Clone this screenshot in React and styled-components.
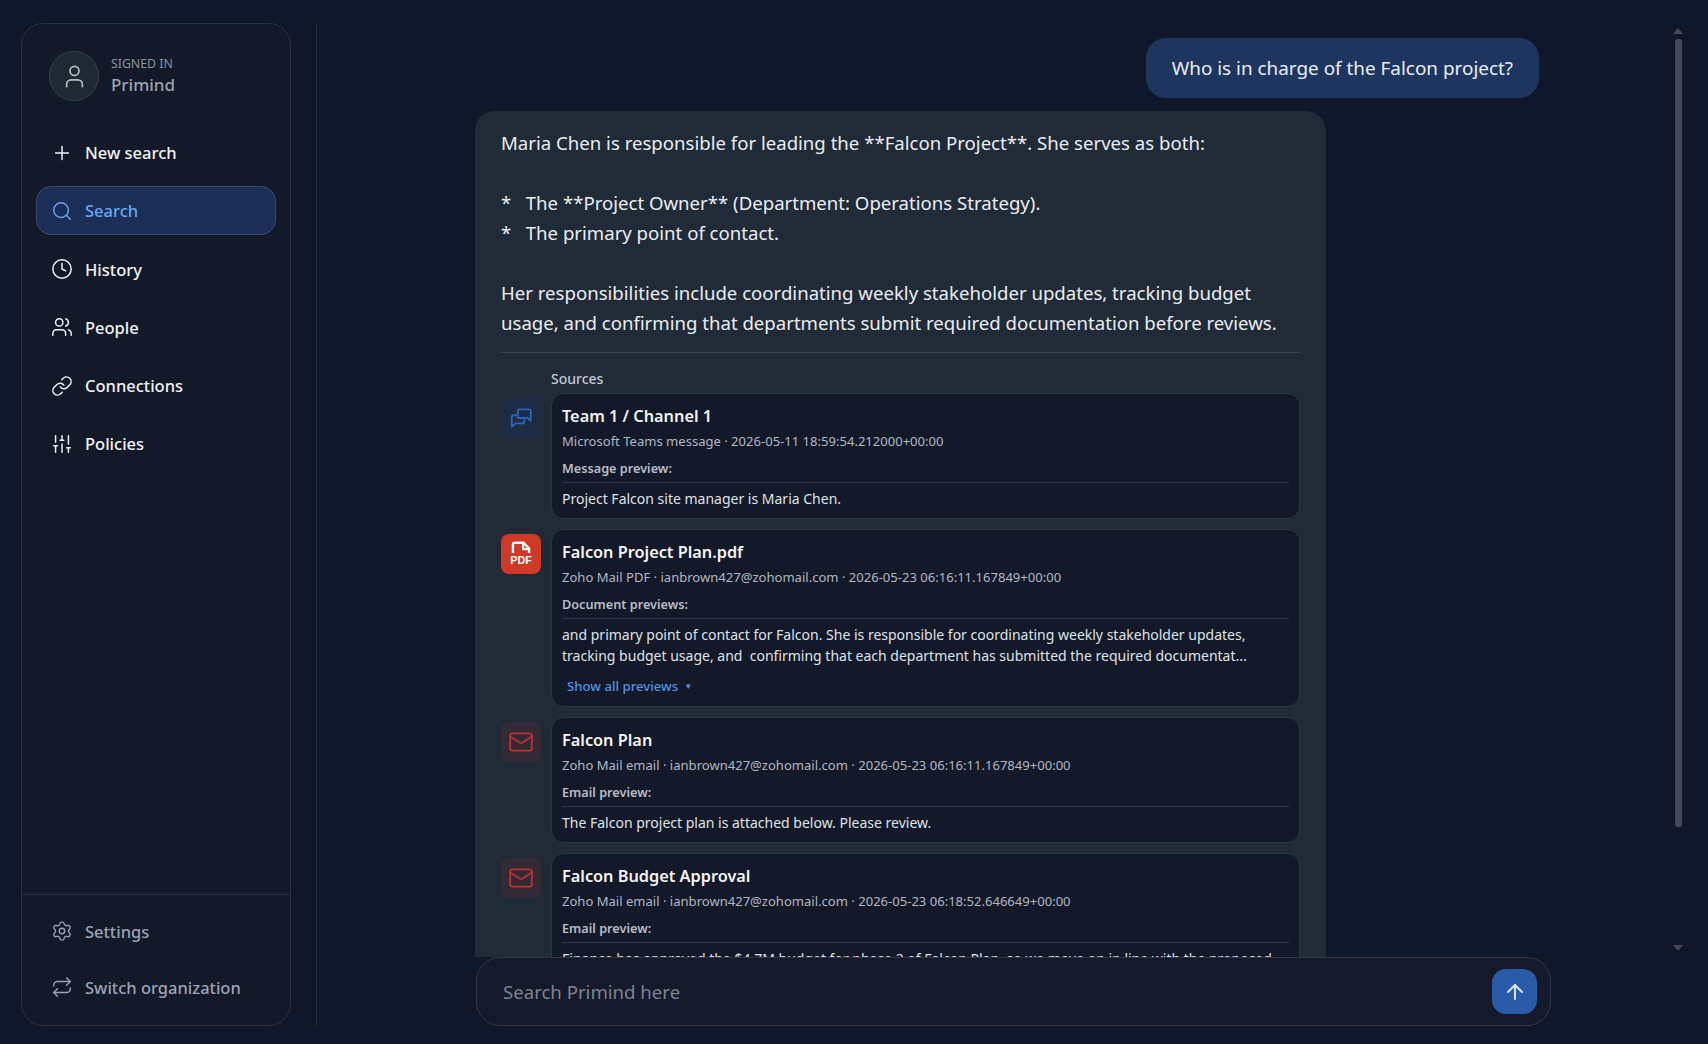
import React from "react";
import styled, { createGlobalStyle } from "styled-components";
import {
  User,
  Plus,
  Search,
  Clock,
  Users,
  Link,
  SlidersVertical,
  Settings,
  Repeat,
  Mail,
  ArrowUp,
} from "lucide-react";

const GlobalStyle = createGlobalStyle`
  html, body {
    margin: 0;
    height: 100%;
    background: #10172a;
    font-family: "Noto Sans", "Open Sans", sans-serif;
    overflow: hidden;
  }
  * { box-sizing: border-box; }
`;

const NAV = [
  { label: "New search", icon: Plus },
  { label: "Search", icon: Search, active: true },
  { label: "History", icon: Clock },
  { label: "People", icon: Users },
  { label: "Connections", icon: Link },
  { label: "Policies", icon: SlidersVertical },
];

const ChatIcon = () => (
  <svg width="26" height="26" viewBox="0 0 24 24" fill="none" stroke="currentColor" strokeWidth="1.7" strokeLinejoin="round" strokeLinecap="round">
    <path d="M8 9.5H5a1.5 1.5 0 0 0-1.5 1.5v9l3.5-3h6.5a1.5 1.5 0 0 0 1.5-1.5V14" />
    <path d="M9 5.5A1.5 1.5 0 0 1 10.5 4h9A1.5 1.5 0 0 1 21 5.5v9L18 12h-7.5A1.5 1.5 0 0 1 9 10.5z" />
  </svg>
);

const PdfIcon = () => (
  <svg width="28" height="28" viewBox="0 0 26 26" fill="none">
    <path
      d="M5.5 12V4.5A2 2 0 0 1 7.5 2.5h8L20.5 8v4"
      stroke="#fff"
      strokeWidth="2.2"
      strokeLinejoin="round"
    />
    <path d="M15 2.5V8.5H20.5" stroke="#fff" strokeWidth="2" strokeLinejoin="round" />
    <text
      x="13"
      y="22.5"
      textAnchor="middle"
      fill="#fff"
      fontSize="10"
      fontWeight="800"
      fontFamily="Liberation Sans, sans-serif"
    >
      PDF
    </text>
  </svg>
);

const SOURCES = [
  {
    kind: "chat",
    title: "Team 1 / Channel 1",
    meta: "Microsoft Teams message · 2026-05-11 18:59:54.212000+00:00",
    label: "Message preview:",
    body: ["Project Falcon site manager is Maria Chen."],
  },
  {
    kind: "pdf",
    title: "Falcon Project Plan.pdf",
    meta: "Zoho Mail PDF · ianbrown427@zohomail.com · 2026-05-23 06:16:11.167849+00:00",
    label: "Document previews:",
    body: [
      "and primary point of contact for Falcon. She is responsible for coordinating weekly stakeholder updates,",
      "tracking budget usage, and  confirming that each department has submitted the required documentat...",
    ],
    more: true,
  },
  {
    kind: "mail",
    title: "Falcon Plan",
    meta: "Zoho Mail email · ianbrown427@zohomail.com · 2026-05-23 06:16:11.167849+00:00",
    label: "Email preview:",
    body: ["The Falcon project plan is attached below. Please review."],
  },
  {
    kind: "mail",
    title: "Falcon Budget Approval",
    meta: "Zoho Mail email · ianbrown427@zohomail.com · 2026-05-23 06:18:52.646649+00:00",
    label: "Email preview:",
    body: ["Finance has approved the $4.7M budget for phase 2 of Falcon Plan, so we move on in line with the proposed"],
  },
];

const SourceRow = ({ source }) => (
  <Source>
    <Tile $kind={source.kind}>
      {source.kind === "chat" && <ChatIcon />}
      {source.kind === "pdf" && <PdfIcon />}
      {source.kind === "mail" && <Mail size={26} strokeWidth={1.7} />}
    </Tile>
    <Card>
      <CardTitle>{source.title}</CardTitle>
      <CardMeta>{source.meta}</CardMeta>
      <CardLabel>{source.label}</CardLabel>
      <CardBody>
        {source.body.map((line) => (
          <div key={line}>{line}</div>
        ))}
      </CardBody>
      {source.more && (
        <ShowAll>
          Show all previews <Caret>▼</Caret>
        </ShowAll>
      )}
    </Card>
  </Source>
);

const App = () => {
  return (
    <Page>
      <GlobalStyle />
      <Sidebar>
        <Profile>
          <Avatar>
            <User size={27} strokeWidth={1.5} />
          </Avatar>
          <div>
            <SignedIn>SIGNED IN</SignedIn>
            <OrgName>Primind</OrgName>
          </div>
        </Profile>
        <Nav>
          {NAV.map((item) => (
            <NavItem key={item.label} $active={item.active}>
              <item.icon size={22} strokeWidth={1.6} />
              {item.label}
            </NavItem>
          ))}
        </Nav>
        <Footer>
          <FooterItem>
            <Settings size={22} strokeWidth={1.5} />
            Settings
          </FooterItem>
          <FooterItem>
            <Repeat size={22} strokeWidth={1.5} />
            Switch organization
          </FooterItem>
        </Footer>
      </Sidebar>
      <Divider />
      <Main>
        <Messages>
          <Thread>
            <UserBubble>Who is in charge of the Falcon project?</UserBubble>
            <Answer>
              <AnswerText>
                {`Maria Chen is responsible for leading the **Falcon Project**. She serves as both:

*   The **Project Owner** (Department: Operations Strategy).
*   The primary point of contact.

Her responsibilities include coordinating weekly stakeholder updates, tracking budget
usage, and confirming that departments submit required documentation before reviews.`}
              </AnswerText>
              <AnswerRule />
              <SourcesLabel>Sources</SourcesLabel>
              <SourceList>
                {SOURCES.map((source) => (
                  <SourceRow key={source.title} source={source} />
                ))}
              </SourceList>
            </Answer>
          </Thread>
          <ScrollRail>
            <ArrowUpMark />
            <Thumb />
            <ArrowDownMark />
          </ScrollRail>
        </Messages>
        <Composer>
          <ComposerInput placeholder="Search Primind here" readOnly />
          <SendButton>
            <ArrowUp size={24} strokeWidth={2} />
          </SendButton>
        </Composer>
      </Main>
    </Page>
  );
};

const Page = styled.div`
  height: 100vh;
  display: flex;
  padding-left: 21px;
  background: #10172a;
`;

const Sidebar = styled.aside`
  width: 270px;
  flex: none;
  margin: 23px 0 18px;
  display: flex;
  flex-direction: column;
  background: #131929;
  border: 1px solid #2a3141;
  border-radius: 22px;
`;

const Profile = styled.div`
  display: flex;
  align-items: center;
  gap: 12px;
  padding: 27px 0 0 27px;
`;

const Avatar = styled.div`
  width: 50px;
  height: 50px;
  border-radius: 50%;
  display: flex;
  align-items: center;
  justify-content: center;
  background: #1f2933;
  border: 1px solid #374151;
  color: #b6bcc6;
`;

const SignedIn = styled.div`
  font-size: 12.3px;
  line-height: 16px;
  color: #8a93a3;
`;

const OrgName = styled.div`
  font-size: 17px;
  line-height: 25px;
  font-weight: 500;
  color: #9ca3af;
`;

const Nav = styled.nav`
  flex: 1;
  display: flex;
  flex-direction: column;
  gap: 9.3px;
  padding: 27px 14px 0;
`;

const NavItem = styled.div`
  height: 49px;
  display: flex;
  align-items: center;
  gap: 12px;
  padding-left: 14px;
  font-size: 16.5px;
  font-weight: 500;
  border-radius: 15px;
  border: 1px solid ${(p) => (p.$active ? "#3a4d70" : "transparent")};
  background: ${(p) => (p.$active ? "#1a2e58" : "transparent")};
  color: ${(p) => (p.$active ? "#6aa6ee" : "#f1f3f6")};
`;

const Footer = styled.div`
  border-top: 1px solid #2a3141;
  padding: 12px 14px 14px;
  display: flex;
  flex-direction: column;
  gap: 8px;
`;

const FooterItem = styled.div`
  height: 48px;
  display: flex;
  align-items: center;
  gap: 12px;
  padding-left: 15px;
  font-size: 16.5px;
  font-weight: 500;
  color: #9aa3b5;
`;

const Divider = styled.div`
  width: 1px;
  flex: none;
  margin: 23px 0 18px 25px;
  background: #262d3d;
`;

const Main = styled.main`
  flex: 1;
  min-width: 0;
  display: flex;
  flex-direction: column;
`;

const Messages = styled.div`
  flex: 1;
  min-height: 0;
  overflow: hidden;
  display: flex;
  padding-left: 158px;
`;

const Thread = styled.div`
  width: 1064px;
  flex: none;
  display: flex;
  flex-direction: column;
  padding-top: 38px;
`;

const UserBubble = styled.div`
  align-self: flex-end;
  height: 60px;
  flex: none;
  display: flex;
  align-items: center;
  padding: 0 26px;
  background: #1e355f;
  border-radius: 20px;
  font-size: 18.9px;
  color: #e9eefa;
  white-space: nowrap;
`;

const Answer = styled.div`
  width: 851px;
  margin-top: 13px;
  flex: none;
  padding: 17px 26px 24px;
  background: #212a37;
  border-radius: 20px 20px 0 0;
`;

const AnswerText = styled.div`
  white-space: pre-wrap;
  font-size: 18.6px;
  line-height: 30px;
  color: #e9edf3;
`;

const AnswerRule = styled.div`
  height: 1px;
  margin-top: 14px;
  background: #3b4452;
`;

const SourcesLabel = styled.div`
  margin: 16px 0 4px 50px;
  font-size: 14px;
  line-height: 20px;
  font-weight: 500;
  color: #c3cad5;
`;

const SourceList = styled.div`
  display: flex;
  flex-direction: column;
  gap: 10px;
`;

const Source = styled.div`
  display: flex;
  align-items: flex-start;
  gap: 10px;
`;

const TILE_COLORS = {
  chat: { bg: "#1d2b45", fg: "#2d64b8" },
  pdf: { bg: "#cf3a27", fg: "#fff" },
  mail: { bg: "#332a36", fg: "#b83232" },
};

const Tile = styled.div`
  width: 40px;
  height: 40px;
  flex: none;
  margin-top: 5px;
  border-radius: 8px;
  display: flex;
  align-items: center;
  justify-content: center;
  background: ${(p) => TILE_COLORS[p.$kind].bg};
  color: ${(p) => TILE_COLORS[p.$kind].fg};
`;

const Card = styled.div`
  flex: 1;
  min-width: 0;
  padding: 10px 10px 9px;
  background: #131928;
  border: 1px solid #2c3544;
  border-radius: 12px;
`;

const CardTitle = styled.div`
  font-size: 16.3px;
  line-height: 24px;
  font-weight: 600;
  color: #f3f4f6;
`;

const CardMeta = styled.div`
  margin-top: 3px;
  font-size: 13.05px;
  line-height: 20px;
  color: #b1b8c4;
`;

const CardLabel = styled.div`
  margin-top: 7px;
  padding-bottom: 4px;
  border-bottom: 1px solid #2f3746;
  font-size: 12.7px;
  line-height: 20px;
  font-weight: 600;
  color: #b7bdc8;
`;

const CardBody = styled.div`
  margin-top: 5px;
  font-size: 14px;
  line-height: 21px;
  color: #dfe3e9;
  white-space: pre;
`;

const ShowAll = styled.div`
  margin: 10px 0 1px 5px;
  font-size: 13.2px;
  line-height: 20px;
  font-weight: 500;
  color: #4f93e6;
  display: flex;
  align-items: center;
  gap: 6px;
`;

const Caret = styled.span`
  font-size: 8px;
  line-height: 1;
`;

const ScrollRail = styled.div`
  margin-left: 135px;
  margin-top: 28px;
  width: 8px;
  height: 923px;
  flex: none;
  display: flex;
  flex-direction: column;
  align-items: center;
`;

const ArrowUpMark = styled.div`
  width: 0;
  height: 0;
  border-left: 5px solid transparent;
  border-right: 5px solid transparent;
  border-bottom: 6px solid #454a58;
`;

const Thumb = styled.div`
  width: 7px;
  height: 788px;
  margin-top: 5px;
  border-radius: 3px;
  background: #454a58;
`;

const ArrowDownMark = styled.div`
  width: 0;
  height: 0;
  margin-top: auto;
  border-left: 5px solid transparent;
  border-right: 5px solid transparent;
  border-top: 6px solid #454a58;
`;

const Composer = styled.div`
  width: 1075px;
  height: 69px;
  flex: none;
  margin: 0 0 18px 159px;
  padding: 0 13px 0 24px;
  display: flex;
  align-items: center;
  background: #141a2a;
  border: 1px solid #303847;
  border-radius: 24px;
`;

const ComposerInput = styled.input`
  flex: 1;
  min-width: 0;
  border: none;
  outline: none;
  background: transparent;
  font-family: inherit;
  font-size: 18.6px;
  color: #e5e7eb;
  &::placeholder {
    color: #7c8492;
  }
`;

const SendButton = styled.button`
  width: 45px;
  height: 45px;
  flex: none;
  padding: 0;
  border: none;
  border-radius: 14px;
  display: flex;
  align-items: center;
  justify-content: center;
  background: #2a5ba8;
  color: #dbe3f0;
`;

export default App;
